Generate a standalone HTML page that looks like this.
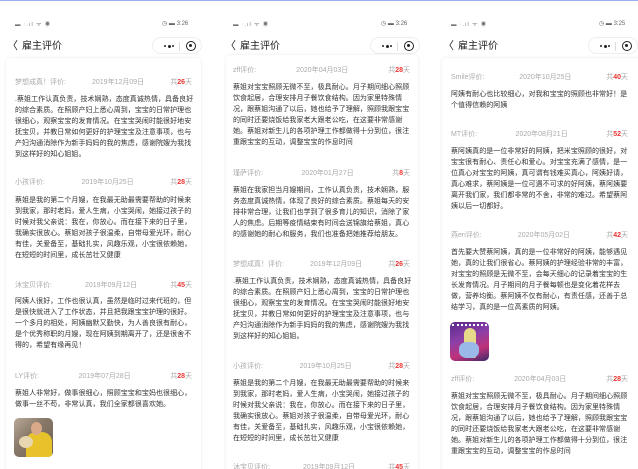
<!DOCTYPE html>
<html><head><meta charset="utf-8">
<style>
*{margin:0;padding:0;box-sizing:border-box}
body{width:638px;height:469px;background:#fff;position:relative;overflow:hidden;font-family:"Liberation Sans","Noto Sans CJK SC",sans-serif;color:#333}
.top{position:absolute;top:0;left:0;width:638px;height:1px;background:#9fb0ee}
.p{position:absolute;top:0;height:469px;width:213px;overflow:hidden}
.st{position:absolute;top:20px;font-size:6px;color:#666}
.sig{position:absolute;top:20px;font-size:5.5px;color:#777;letter-spacing:1px}
.back{position:absolute;top:37px;font-size:11px;color:#222}
.title{position:absolute;top:37px;font-size:10px;color:#222}
.cap{position:absolute;top:37px;width:50px;height:17px;border:1px solid #eee;border-radius:9px;background:#fff}
.cap i{position:absolute;top:7px;width:2px;height:2px;background:#222;border-radius:50%}
.cap i.m{width:3px;height:3px;top:6.5px}
.cap .sep{position:absolute;left:26px;top:4px;width:1px;height:9px;background:#ddd}
.cap .o{position:absolute;left:33px;top:3px;width:10px;height:10px;border:1.3px solid #222;border-radius:50%}
.cap .o:after{content:"";position:absolute;left:2px;top:2px;width:3.4px;height:3.4px;background:#222;border-radius:50%}
.card{position:absolute;top:58px;height:420px;background:#fff;box-shadow:0 0 3px rgba(0,0,0,.09);border-radius:4px}
.h{position:absolute;display:flex;justify-content:space-between;font-size:7px;color:#aaa;height:10px;line-height:10px;white-space:nowrap}
.h b{color:#e33;font-weight:bold}
.t{position:absolute;font-size:7px;line-height:11px;color:#333;white-space:nowrap;letter-spacing:0.05px}
.img{position:absolute;width:39px;height:39px;border-radius:5px;overflow:hidden}
</style></head><body>
<div class="top"></div>

<!-- panel 1 -->
<div class="p" style="left:0">
<div class="sig" style="left:15px">▬ ᐧ.ıl ᯤ ◉</div>
<div class="st" style="left:162px">◷ ▬ 3:26</div>
<div class="back" style="left:7px">〈</div>
<div class="title" style="left:22px">雇主评价</div>
<div class="cap" style="left:152px"><i style="left:11px"></i><i class="m" style="left:14.5px"></i><i style="left:19px"></i><div class="sep"></div><div class="o"></div></div>
<div class="card" style="left:6px;width:195px"></div>
<div class="h" style="left:15px;width:177px;top:78px"><span>梦想成真！评价:</span><span>2019年12月09日</span><span>共<b>26</b>天</span></div>
<div class="t" style="left:15px;top:94px">.蔡姐工作认真负责，技术娴熟，态度真诚热情，具备良好<br>的综合素质。在照顾产妇上悉心周到，宝宝的日常护理也<br>很细心，观察宝宝的发育情况。在宝宝哭闹时能很好地安<br>抚宝贝，并教日常如何更好的护理宝宝及注意事项，也与<br>产妇沟通消除作为新手妈妈的我的焦虑，感谢院嫂为我找<br>到这样好的知心姐姐。</div>
<div class="h" style="left:15px;width:177px;top:178px"><span>小孩评价:</span><span>2019年10月25日</span><span>共<b>28</b>天</span></div>
<div class="t" style="left:15px;top:195px">蔡姐是我的第二个月嫂，在我最无助最需要帮助的时候来<br>到我家，那时老妈，爱人生病，小宝哭闹，她接过孩子的<br>时候对我父亲说：我在，你放心。而在接下来的日子里，<br>我确实很放心。蔡姐对孩子很温柔，自带母爱光环，耐心<br>有佳，关爱备至，基础扎实，风趣乐观，小宝很依赖她，<br>在短短的时间里，成长茁壮又健康</div>
<div class="h" style="left:15px;width:177px;top:281px"><span>沐宝贝评价:</span><span>2019年09月12日</span><span>共<b>45</b>天</span></div>
<div class="t" style="left:15px;top:296px">阿姨人很好，工作也很认真，虽然是临时过来代班的，但<br>是很快就进入了工作状态，并且把我跟宝宝护理的很好。<br>一个多月的相处，阿姨幽默又勤快，为人善良很有耐心，<br>是个优秀称职的月嫂，现在阿姨到期离开了，还是很舍不<br>得的，希望有缘再见！</div>
<div class="h" style="left:15px;width:177px;top:372px"><span>LY评价:</span><span>2019年07月28日</span><span>共<b>28</b>天</span></div>
<div class="t" style="left:15px;top:388px">蔡姐人非常好，做事很细心，照顾宝宝和宝妈也很细心，<br>做事一丝不苟，非常认真，我们全家都很喜欢她。</div>
<div class="img" style="left:14px;top:418px;background:linear-gradient(135deg,#b9a99a 0%,#8a7a6a 40%,#6b5d50 100%)">
<div style="position:absolute;left:12px;top:14px;width:26px;height:25px;background:#e8c22a;border-radius:10px 10px 0 0"></div>
<div style="position:absolute;left:17px;top:4px;width:11px;height:13px;background:#d9a98a;border-radius:50%"></div>
<div style="position:absolute;left:5px;top:18px;width:14px;height:12px;background:#e8d6b0;border-radius:50%"></div></div>
</div>

<!-- panel 2 -->
<div class="p" style="left:213px">
<div class="sig" style="left:20px">▬ ᐧ.ıl ᯤ ◉</div>
<div class="st" style="left:168px">◷ ▬ 3:26</div>
<div class="back" style="left:12px">〈</div>
<div class="title" style="left:27px">雇主评价</div>
<div class="cap" style="left:157px"><i style="left:11px"></i><i class="m" style="left:14.5px"></i><i style="left:19px"></i><div class="sep"></div><div class="o"></div></div>
<div class="card" style="left:13px;width:192px;top:55px"></div>
<div class="h" style="left:20px;width:177px;top:66px"><span>zff评价:</span><span>2020年04月03日</span><span>共<b>28</b>天</span></div>
<div class="t" style="left:20px;top:82px">蔡姐对宝宝照顾无微不至，极具耐心。月子期间细心照顾<br>饮食起居，合理安排月子餐饮食结构。因为家里特殊情<br>况，跟蔡姐沟通了以后，她也给予了理解，照顾我跟宝宝<br>的同时还要烧饭给我家老大跟老公吃，在这要非常感谢<br>她。蔡姐对新生儿的各项护理工作都做得十分到位，很注<br>重跟宝宝的互动，调整宝宝的作息时间</div>
<div class="h" style="left:20px;width:177px;top:169px"><span>瑾萨评价:</span><span>2020年01月27日</span><span>共<b>8</b>天</span></div>
<div class="t" style="left:20px;top:185px">蔡姐在我家担当月嫂期间，工作认真负责，技术娴熟，服<br>务态度真诚热情，体现了良好的综合素质。蔡姐每天的安<br>排非常合理，让我们也学到了很多育儿的知识，消除了家<br>人的焦虑。后期等疫情结束有时间会送锦旗给蔡姐，真心<br>的感谢她的耐心和服务，我们也准备把她推荐给朋友。</div>
<div class="h" style="left:20px;width:177px;top:260px"><span>梦想成真！评价:</span><span>2019年12月09日</span><span>共<b>26</b>天</span></div>
<div class="t" style="left:20px;top:276px">.蔡姐工作认真负责，技术娴熟，态度真诚热情，具备良好<br>的综合素质。在照顾产妇上悉心周到，宝宝的日常护理也<br>很细心，观察宝宝的发育情况。在宝宝哭闹时能很好地安<br>抚宝贝，并教日常如何更好的护理宝宝及注意事项，也与<br>产妇沟通消除作为新手妈妈的我的焦虑，感谢院嫂为我找<br>到这样好的知心姐姐。</div>
<div class="h" style="left:20px;width:177px;top:362px"><span>小孩评价:</span><span>2019年10月25日</span><span>共<b>28</b>天</span></div>
<div class="t" style="left:20px;top:378px">蔡姐是我的第二个月嫂，在我最无助最需要帮助的时候来<br>到我家，那时老妈，爱人生病，小宝哭闹，她接过孩子的<br>时候对我父亲说：我在，你放心。而在接下来的日子里，<br>我确实很放心。蔡姐对孩子很温柔，自带母爱光环，耐心<br>有佳，关爱备至，基础扎实，风趣乐观，小宝很依赖她，<br>在短短的时间里，成长茁壮又健康</div>
<div class="h" style="left:20px;width:177px;top:463px"><span>沐宝贝评价:</span><span>2019年09月12日</span><span>共<b>45</b>天</span></div>
</div>

<!-- panel 3 -->
<div class="p" style="left:425px">
<div class="sig" style="left:26px">▬ ᐧ.ıl ᯤ ◉</div>
<div class="st" style="left:174px">◷ ▬ 3:25</div>
<div class="back" style="left:18px">〈</div>
<div class="title" style="left:33px">雇主评价</div>
<div class="cap" style="left:163px"><i style="left:11px"></i><i class="m" style="left:14.5px"></i><i style="left:19px"></i><div class="sep"></div><div class="o"></div></div>
<div class="card" style="left:17px;width:210px"></div>
<div class="h" style="left:26px;width:177px;top:73px"><span>Smile评价:</span><span>2020年10月25日</span><span>共<b>40</b>天</span></div>
<div class="t" style="left:26px;top:89px">阿姨有耐心也比较细心，对我和宝宝的照顾也非常好！是<br>个值得信赖的阿姨</div>
<div class="h" style="left:26px;width:177px;top:130px"><span>MT评价:</span><span>2020年08月21日</span><span>共<b>52</b>天</span></div>
<div class="t" style="left:26px;top:146px">蔡阿姨真的是一位非常好的阿姨，把米宝照顾的很好，对<br>宝宝很有耐心、责任心和爱心。对宝宝充满了感情，是一<br>位真心对宝宝的阿姨，真可谓有钱难买真心，阿姨好请，<br>真心难求，蔡阿姨是一位可遇不可求的好阿姨，蔡阿姨要<br>离开我们家，我们都非常的不舍，非常的难过。希望蔡阿<br>姨以后一切都好。</div>
<div class="h" style="left:26px;width:177px;top:231px"><span>燕eri评价:</span><span>2020年05月02日</span><span>共<b>42</b>天</span></div>
<div class="t" style="left:26px;top:247px">首先要大赞蔡阿姨，真的是一位非常好的阿姨，能够遇见<br>她，真的让我们很省心。蔡阿姨的护理经验非常的丰富，<br>对宝宝的照顾是无微不至，会每天细心的记录着宝宝的生<br>长发育情况。月子期间的月子餐每顿也是变化着花样去<br>做，营养均衡。蔡阿姨不仅有耐心，有责任感，还善于总<br>结学习，真的是一位高素质的阿姨。</div>
<div class="img" style="left:25px;top:322px;background:linear-gradient(160deg,#5a2a8a 0%,#8b3fa8 40%,#c0327a 70%,#3a2a6a 100%)">
<div style="position:absolute;left:14px;top:6px;width:12px;height:30px;background:#e8d88a;border-radius:6px 6px 2px 2px"></div>
<div style="position:absolute;left:9px;top:20px;width:20px;height:16px;background:#9ab8e8;border-radius:40%"></div>
<div style="position:absolute;left:2px;top:2px;width:35px;height:3px;border-top:2px dotted #fff"></div></div>
<div class="h" style="left:26px;width:177px;top:375px"><span>zff评价:</span><span>2020年04月03日</span><span>共<b>28</b>天</span></div>
<div class="t" style="left:26px;top:391px">蔡姐对宝宝照顾无微不至，极具耐心。月子期间细心照顾<br>饮食起居，合理安排月子餐饮食结构。因为家里特殊情<br>况，跟蔡姐沟通了以后，她也给予了理解，照顾我跟宝宝<br>的同时还要烧饭给我家老大跟老公吃，在这要非常感谢<br>她。蔡姐对新生儿的各项护理工作都做得十分到位，很注<br>重跟宝宝的互动，调整宝宝的作息时间</div>
</div>
</body></html>
